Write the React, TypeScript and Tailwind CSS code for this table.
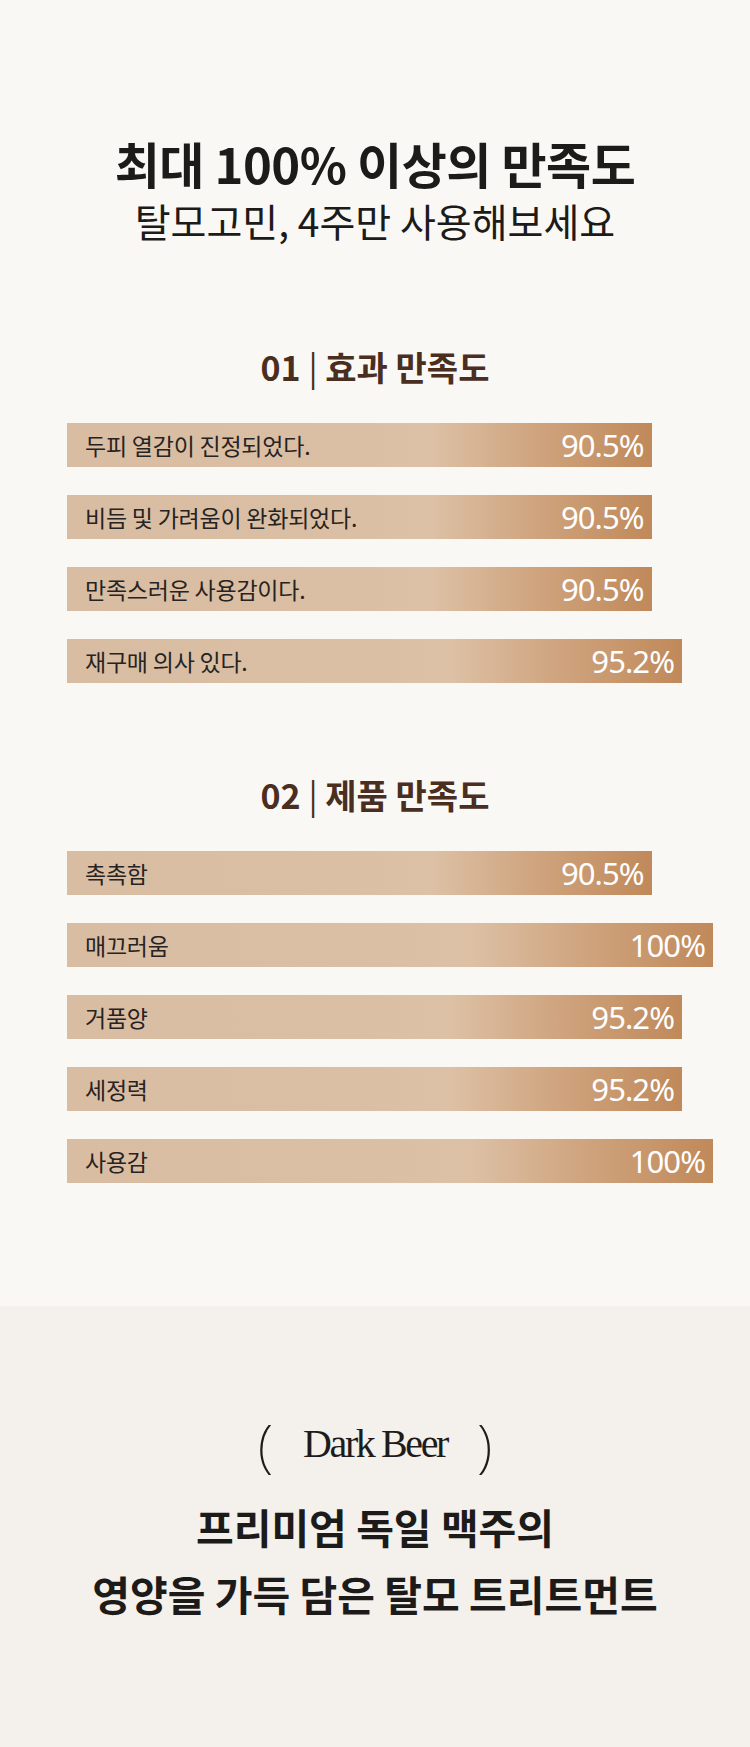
const effects = [
  { label: "두피 열감이 진정되었다.", pct: 90.5 },
  { label: "비듬 및 가려움이 완화되었다.", pct: 90.5 },
  { label: "만족스러운 사용감이다.", pct: 90.5 },
  { label: "재구매 의사 있다.", pct: 95.2 },
]

const products = [
  { label: "촉촉함", pct: 90.5 },
  { label: "매끄러움", pct: 100 },
  { label: "거품양", pct: 95.2 },
  { label: "세정력", pct: 95.2 },
  { label: "사용감", pct: 100 },
]

function Bar({ label, pct }: { label: string; pct: number }) {
  return (
    <div
      className="flex h-[44px] items-center justify-between bg-[linear-gradient(90deg,#d9bda2_0%,#dbbfa4_50%,#ddc1a6_62%,#cfa47e_80%,#c0895a_100%)] pl-[18px] pr-[8px]"
      style={{ width: `${pct}%` }}
    >
      <span className="text-[23px] leading-none tracking-[-0.01em] text-[#262322]">{label}</span>
      <span className="font-['Noto_Sans','Noto_Sans_CJK_KR',sans-serif] text-[31px] font-normal leading-none tracking-[-0.03em] text-white">
        {pct % 1 === 0 ? pct : pct.toFixed(1)}%
      </span>
    </div>
  )
}

function Section({ title, items }: { title: string; items: { label: string; pct: number }[] }) {
  const [num, name] = title.split(" | ")
  return (
    <div className="flex flex-col">
      <h2 className="text-center text-[34px] font-bold leading-[40px] text-[#4a2e1f]">
        {num} <span className="font-normal">|</span> {name}
      </h2>
      <div className="mt-[36px] ml-[67px] flex w-[646px] flex-col gap-[28px]">
        {items.map((it) => (
          <Bar key={it.label} label={it.label} pct={it.pct} />
        ))}
      </div>
    </div>
  )
}

export default function App() {
  return (
    <div className="w-[750px] font-['Noto_Sans_CJK_KR','Noto_Sans',sans-serif]">
      <section className="bg-[#faf8f4] pt-[134px] pb-[123px]">
        <h1 className="text-center text-[49px] font-bold leading-[58px] tracking-[-0.01em] text-[#1c1b1a]">
          최대 100% 이상의 만족도
        </h1>
        <p className="mt-[4px] text-center text-[39px] leading-[48px] text-[#1c1b1a]">
          탈모고민, 4주만 사용해보세요
        </p>

        <div className="mt-[103px]">
          <Section title="01 | 효과 만족도" items={effects} />
        </div>
        <div className="mt-[92px]">
          <Section title="02 | 제품 만족도" items={products} />
        </div>
      </section>

      <section className="bg-[#f4f0eb] pt-[108px] pb-[120px]">
        <div className="flex h-[60px] items-center justify-center gap-[30px] text-[#1e1c1a]">
          <span className="font-['Noto_Sans',sans-serif] text-[58px] font-extralight leading-none">(</span>
          <span className="font-['Liberation_Serif',serif] text-[40px] leading-none tracking-[-0.06em]">Dark Beer</span>
          <span className="font-['Noto_Sans',sans-serif] text-[58px] font-extralight leading-none">)</span>
        </div>
        <div className="mt-[19px] text-center text-[41px] font-bold leading-[67px] text-[#1c1b1a]">
          <p>프리미엄 독일 맥주의</p>
          <p>영양을 가득 담은 탈모 트리트먼트</p>
        </div>
      </section>
    </div>
  )
}
